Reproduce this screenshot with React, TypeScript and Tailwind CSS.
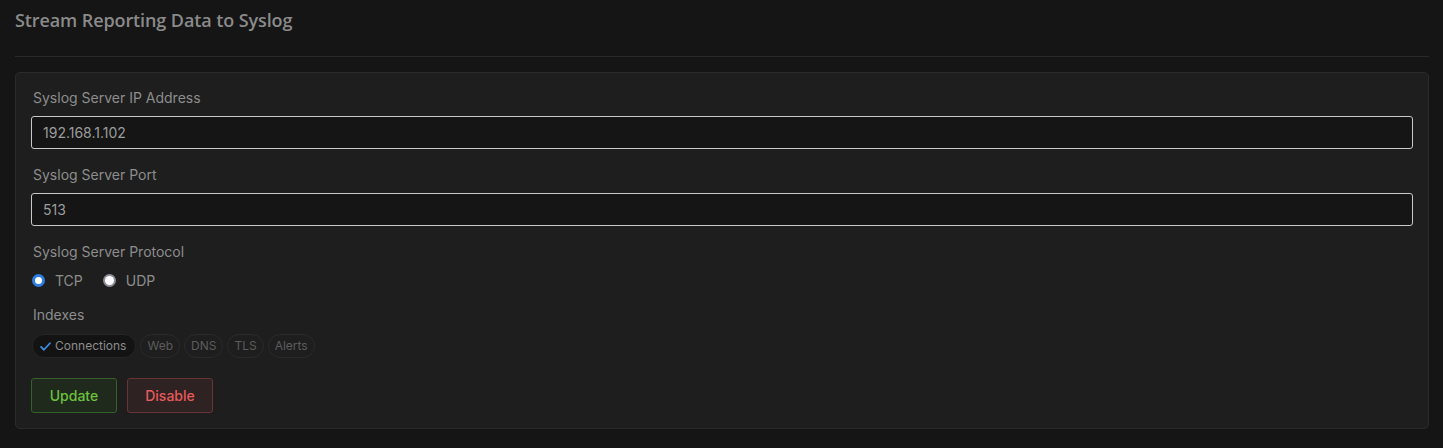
import React from "react";

export default function App() {
  const chips = [
    { name: "Connections", on: true },
    { name: "Web", on: false },
    { name: "DNS", on: false },
    { name: "TLS", on: false },
    { name: "Alerts", on: false },
  ];
  return (
    <div className="min-h-[448px] w-full bg-[#151515] pl-[15px] pr-[14px] pb-[19px] font-['Inter','Liberation_Sans',sans-serif]">
      <div className="flex h-[40px] items-center">
        <h1 className="font-['Open_Sans','Liberation_Sans',sans-serif] text-[18px] font-semibold text-[#8a8a8a] tracking-[-0.1px]">
          Stream Reporting Data to Syslog
        </h1>
      </div>
      <div className="mt-[16px] h-px bg-[#2a2a2a]" />
      <div className="mt-[15px] rounded-[5px] border border-[#2b2b2b] bg-[#1e1e1e] px-[15px] pt-[15px] pb-[15px]">
        <div className="h-[20px] pl-[2px] text-[14px] leading-[20px] text-[#8d8d8d]">Syslog Server IP Address</div>
        <div className="mt-[8px] flex h-[33px] items-center rounded-[3px] border border-[#c9c9c9] bg-[#151515] px-[11px] text-[14px] text-[#9c9c9c]">
          192.168.1.102
        </div>
        <div className="mt-[16px] h-[20px] pl-[2px] text-[14px] leading-[20px] text-[#8d8d8d]">Syslog Server Port</div>
        <div className="mt-[8px] flex h-[33px] items-center rounded-[3px] border border-[#c9c9c9] bg-[#151515] px-[11px] text-[14px] text-[#9c9c9c]">
          513
        </div>
        <div className="mt-[16px] h-[20px] pl-[2px] text-[14px] leading-[20px] text-[#8d8d8d]">Syslog Server Protocol</div>
        <div className="mt-[8px] flex h-[20px] items-center pl-[1px] text-[14px] text-[#8d8d8d]">
          <span className="flex h-[13px] w-[13px] items-center justify-center rounded-full bg-[#2f7de1]">
            <span className="h-[7px] w-[7px] rounded-full bg-[#ffffff]" />
          </span>
          <span className="ml-[10px]">TCP</span>
          <span className="ml-[20px] flex h-[13px] w-[13px] items-center justify-center rounded-full bg-[#8d8d96]">
            <span className="h-[9px] w-[9px] rounded-full bg-[#ffffff]" />
          </span>
          <span className="ml-[10px]">UDP</span>
        </div>
        <div className="mt-[15px] h-[20px] pl-[2px] text-[14px] leading-[20px] text-[#8d8d8d]">Indexes</div>
        <div className="mt-[9px] flex gap-[4px] pl-[1px]">
          {chips.map((c) =>
            c.on ? (
              <div
                key={c.name}
                className="flex h-[24px] items-center gap-[3px] rounded-full border border-[#262626] bg-[#131313] pl-[6px] pr-[9px] text-[12px] text-[#8d8d8d]"
              >
                <svg width="13" height="13" viewBox="0 0 16 16" fill="none">
                  <path d="M2.5 8.5 L6 12 L13.5 4" stroke="#3b8de6" strokeWidth="2.2" strokeLinecap="round" strokeLinejoin="round" />
                </svg>
                {c.name}
              </div>
            ) : (
              <div
                key={c.name}
                className="flex h-[24px] items-center rounded-full border border-[#2a2a2a] px-[6px] text-[12px] text-[#5c5c5c]"
              >
                {c.name}
              </div>
            )
          )}
        </div>
        <div className="mt-[20px] flex gap-[10px]">
          <button className="h-[35px] w-[86px] rounded-[3px] border border-[#35602a] bg-[#1f2a1c] text-[14px] font-medium text-[#6cc13e]">
            Update
          </button>
          <button className="h-[35px] w-[86px] rounded-[3px] border border-[#6b3434] bg-[#2f2222] text-[14px] font-medium text-[#e65a5a]">
            Disable
          </button>
        </div>
      </div>
    </div>
  );
}
